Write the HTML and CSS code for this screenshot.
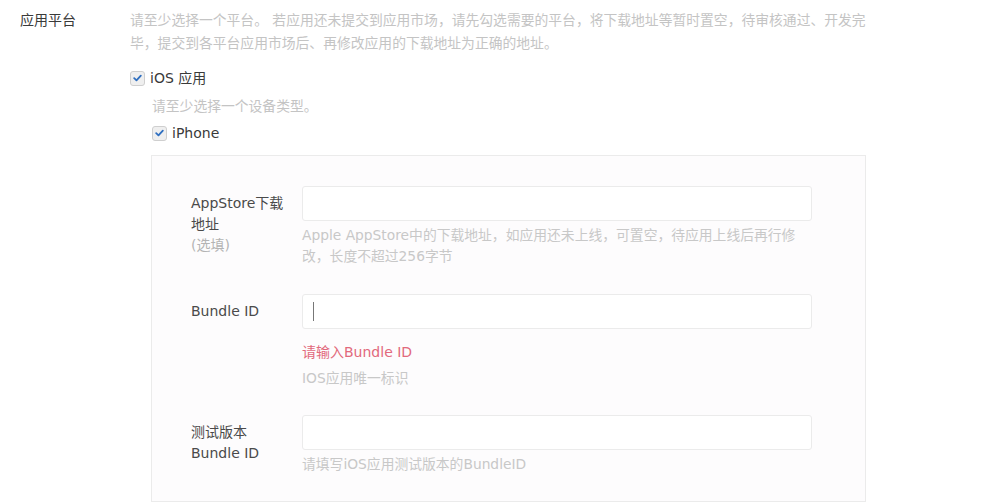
FILE: index.html
```html
<!DOCTYPE html>
<html lang="zh-CN">
<head>
<meta charset="utf-8">
<title>应用平台</title>
<link rel="stylesheet" href="styles.css">
</head>
<body>
<div class="page">
  <div class="form-row">
    <div class="row-label">应用平台</div>
    <div class="row-body">
      <p class="desc">请至少选择一个平台。 若应用还未提交到应用市场，请先勾选需要的平台，将下载地址等暂时置空，待审核通过、开发完毕，提交到各平台应用市场后、再修改应用的下载地址为正确的地址。</p>
      <label class="check check-top">
        <span class="box"><svg viewBox="0 0 14 14" width="14" height="14"><path d="M3.4 7.2 L5.9 9.6 L10.6 4.4" fill="none" stroke="#2f6fc0" stroke-width="1.9" stroke-linecap="round" stroke-linejoin="round"/></svg></span>
        <span class="check-text">iOS 应用</span>
      </label>
      <div class="sub">
        <p class="sub-desc">请至少选择一个设备类型。</p>
        <label class="check check-device">
          <span class="box"><svg viewBox="0 0 14 14" width="14" height="14"><path d="M3.4 7.2 L5.9 9.6 L10.6 4.4" fill="none" stroke="#2f6fc0" stroke-width="1.9" stroke-linecap="round" stroke-linejoin="round"/></svg></span>
          <span class="check-text">iPhone</span>
        </label>
        <div class="panel">
          <div class="field field-first">
            <div class="field-label">AppStore下载<br>地址<br><span class="optional">(选填)</span></div>
            <div class="field-body">
              <div class="input"></div>
              <p class="hint">Apple AppStore中的下载地址，如应用还未上线，可置空，待应用上线后再行修改，长度不超过256字节</p>
            </div>
          </div>
          <div class="field field-second">
            <div class="field-label">Bundle ID</div>
            <div class="field-body">
              <div class="input"><span class="caret"></span></div>
              <p class="error">请输入Bundle ID</p>
              <p class="hint hint-after-error">IOS应用唯一标识</p>
            </div>
          </div>
          <div class="field field-third">
            <div class="field-label">测试版本<br>Bundle ID</div>
            <div class="field-body">
              <div class="input"></div>
              <p class="hint">请填写iOS应用测试版本的BundleID</p>
            </div>
          </div>
        </div>
      </div>
    </div>
  </div>
</div>
</body>
</html>
```
FILE: styles.css
```css
* { box-sizing: border-box; }
html, body {
  margin: 0;
  padding: 0;
  background: #fff;
}
body {
  font-family: "DejaVu Sans", "Noto Sans CJK SC", sans-serif;
  font-size: 14px;
  color: #333;
  overflow: hidden;
}
p { margin: 0; }
.page {
  padding: 9px 0 0 20px;
}
.form-row {
  display: flex;
}
.row-label {
  width: 110px;
  flex: none;
  line-height: 23px;
  color: #3a3a3a;
}
.row-body {
  flex: none;
  width: 745px;
}
.desc {
  font-size: 13.8px;
  line-height: 23px;
  color: #c4c4c4;
  width: 740px;
}
.check {
  display: flex;
  align-items: center;
  gap: 5px;
  height: 20px;
  line-height: 20px;
  color: #3a3a3a;
}
.check-top { margin-top: 13px; }
.box {
  width: 15px;
  height: 15px;
  border: 1px solid #cfcfcf;
  border-radius: 3px;
  background: #efefef;
  display: flex;
  align-items: center;
  justify-content: center;
  flex: none;
}
.box svg { display: block; }
.sub {
  margin-left: 21px;
}
.sub-desc {
  margin-top: 8px;
  margin-left: 1px;
  font-size: 13.8px;
  line-height: 20px;
  color: #c4c4c4;
}
.check-device {
  margin-top: 7px;
  margin-left: 1px;
}
.panel {
  margin-top: 12px;
  width: 715px;
  border: 1px solid #ebebeb;
  background: #fdfcfd;
  padding: 30px 0 26px 39px;
}
.field {
  display: flex;
}
.field-second { margin-top: 27px; }
.field-third { margin-top: 26px; }
.field-label {
  width: 111px;
  flex: none;
  margin-top: 7px;
  line-height: 21px;
  color: #4a4a4a;
}
.optional {
  color: #b4b4b4;
}
.field-body {
  width: 510px;
  flex: none;
}
.input {
  height: 35px;
  border: 1px solid #ebebeb;
  border-radius: 3px;
  background: #fff;
  position: relative;
}
.caret {
  position: absolute;
  left: 10px;
  top: 7px;
  width: 1px;
  height: 19px;
  background: #777;
}
.hint {
  margin-top: 4px;
  width: 502px;
  font-size: 13.8px;
  line-height: 21px;
  color: #c8c8c8;
}
.error {
  margin-top: 13px;
  line-height: 21px;
  color: #e2697c;
}
.hint-after-error {
  margin-top: 5px;
}
```
